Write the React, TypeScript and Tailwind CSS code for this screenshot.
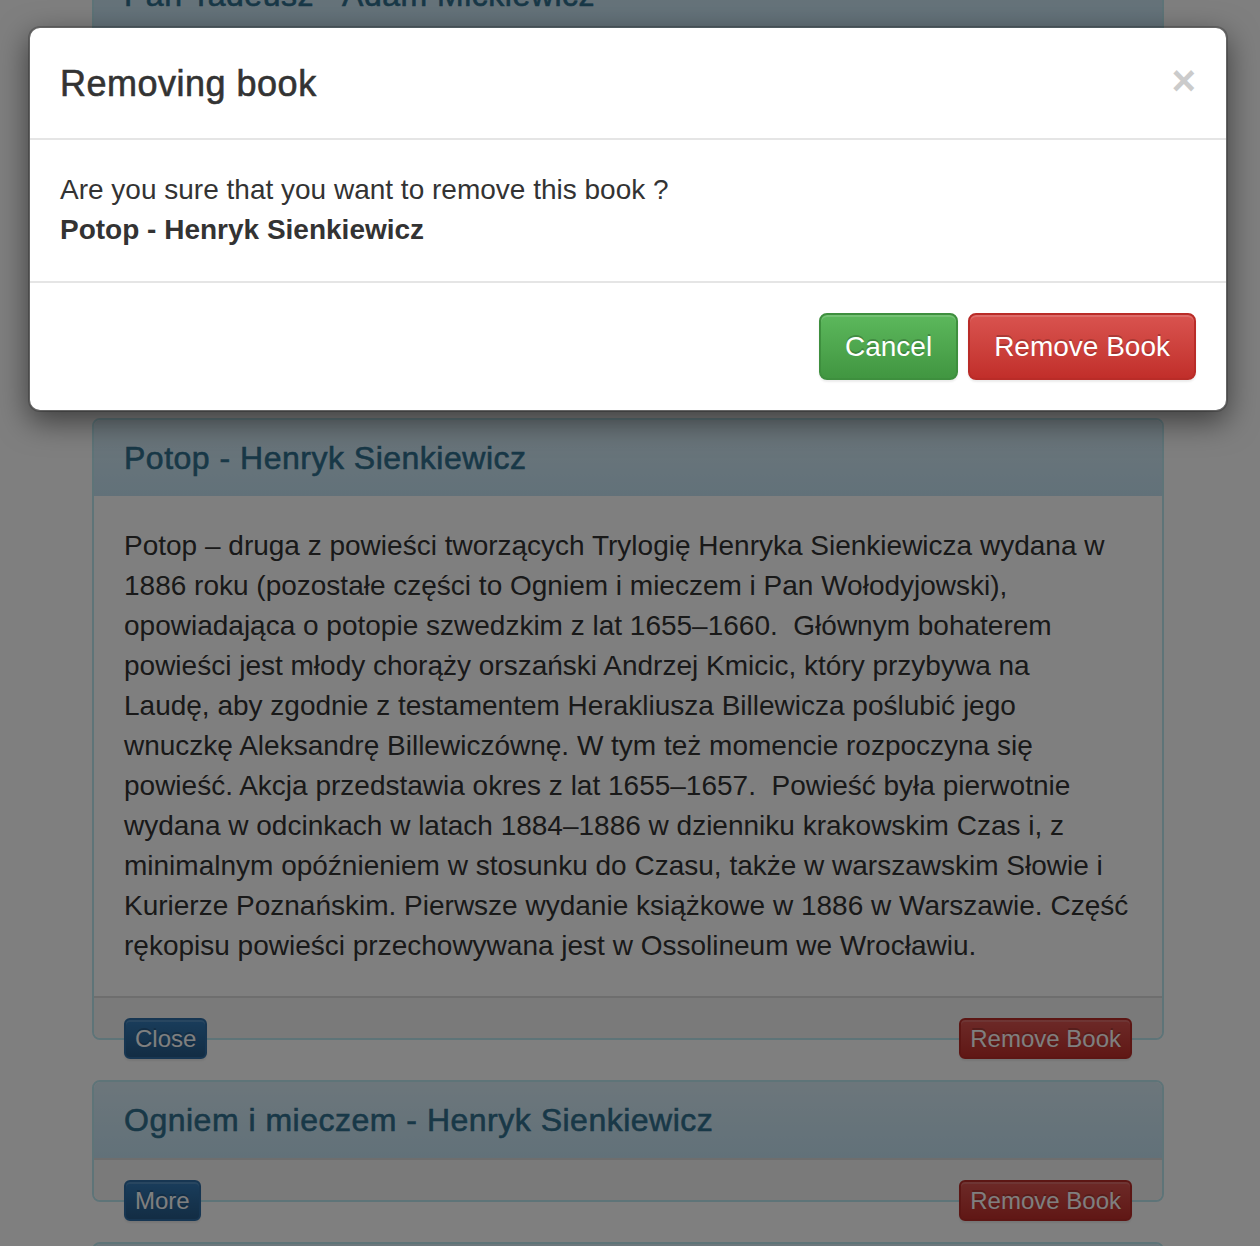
import React from "react";

const FONT = "font-['Liberation_Sans','Helvetica_Neue',Arial,sans-serif]";
// Helvetica Neue 500 look for headings
const HEADING = "font-normal tracking-[0.5px] [-webkit-text-stroke:0.6px_currentColor]";

const POTOP_LINES = [
	"Potop – druga z powieści tworzących Trylogię Henryka Sienkiewicza wydana w",
	"1886 roku (pozostałe części to Ogniem i mieczem i Pan Wołodyjowski),",
	"opowiadająca o potopie szwedzkim z lat 1655–1660.\u00a0 Głównym bohaterem",
	"powieści jest młody chorąży orszański Andrzej Kmicic, który przybywa na",
	"Laudę, aby zgodnie z testamentem Herakliusza Billewicza poślubić jego",
	"wnuczkę Aleksandrę Billewiczównę. W tym też momencie rozpoczyna się",
	"powieść. Akcja przedstawia okres z lat 1655–1657.\u00a0 Powieść była pierwotnie",
	"wydana w odcinkach w latach 1884–1886 w dzienniku krakowskim Czas i, z",
	"minimalnym opóźnieniem w stosunku do Czasu, także w warszawskim Słowie i",
	"Kurierze Poznańskim. Pierwsze wydanie książkowe w 1886 w Warszawie. Część",
	"rękopisu powieści przechowywana jest w Ossolineum we Wrocławiu.",
];

const BTN_XS =
	"rounded-[6px] border-2 px-[9px] py-0 text-[24px] leading-[37px] text-white [text-shadow:0_-2px_0_rgba(0,0,0,0.2)] shadow-[inset_0_2px_0_rgba(255,255,255,0.15),0_2px_2px_rgba(0,0,0,0.075)]";
const BTN_PRIMARY = "border-[#2e6da4] bg-linear-to-b from-[#337ab7] to-[#265a88]";
const BTN_DANGER = "border-[#b92c28] bg-linear-to-b from-[#d9534f] to-[#c12e2a]";
const BTN_MD =
	"rounded-[8px] border-2 px-[24px] py-[11px] text-[28px] leading-[41px] text-white [text-shadow:0_-2px_0_rgba(0,0,0,0.2)] shadow-[inset_0_2px_0_rgba(255,255,255,0.15),0_2px_2px_rgba(0,0,0,0.075)]";

function Panel({
	title,
	left,
	children,
	bodyClass,
}: {
	title: string;
	left: string;
	children?: React.ReactNode;
	bodyClass?: string;
}) {
	return (
		<div className="mb-[40px] rounded-[8px] border-2 border-[#bce8f1] bg-white">
			<div className="rounded-t-[6px] bg-linear-to-b from-[#d9edf7] to-[#c4e3f3] px-[30px] py-[20px]">
				<h3 className={`text-[32px] leading-[36px] text-[#31708f] ${HEADING}`}>{title}</h3>
			</div>
			{(children || bodyClass) && (
				<div className={bodyClass ?? "px-[30px] py-[30px] text-[28px] leading-[40px] text-[#333]"}>
					{children}
				</div>
			)}
			<div className="h-[42px] rounded-b-[6px] border-t-2 border-[#ddd] bg-[#f5f5f5] px-[30px] pt-[20px]">
				<div className="flex h-0 items-start justify-between">
					<button className={`${BTN_XS} ${BTN_PRIMARY}`}>{left}</button>
					<button className={`${BTN_XS} ${BTN_DANGER}`}>Remove Book</button>
				</div>
			</div>
		</div>
	);
}

export default function App() {
	return (
		<div className={`relative h-[1246px] w-[1260px] overflow-hidden bg-white ${FONT}`}>
			{/* Page */}
			<div className="ml-[92px] mt-[-45px] w-[1072px]">
				<Panel title="Pan Tadeusz - Adam Mickiewicz" left="Close" bodyClass="h-[301px]" />
				<Panel title="Potop - Henryk Sienkiewicz" left="Close">
					{POTOP_LINES.map((line) => (
						<div key={line} className="whitespace-nowrap">
							{line}
						</div>
					))}
				</Panel>
				<Panel title="Ogniem i mieczem - Henryk Sienkiewicz" left="More" />
				<Panel title="Quo vadis - Henryk Sienkiewicz" left="More" />
			</div>

			{/* Backdrop */}
			<div className="absolute inset-0 bg-black/50" />

			{/* Modal */}
			<div className="absolute left-[28px] right-[32px] top-[26px] rounded-[12px] border-2 border-black/20 bg-white bg-clip-padding shadow-[0_10px_30px_rgba(0,0,0,0.5)]">
				<div className="flex items-start justify-between border-b-2 border-[#e5e5e5] px-[30px] pt-[30px] pb-[28px]">
					<h4 className={`text-[36px] leading-[52px] text-[#333] ${HEADING}`}>Removing book</h4>
					<button className="mt-[2px] text-[42px] leading-[42px] font-bold text-black opacity-20">×</button>
				</div>
				<div className="px-[30px] pt-[30px] pb-[31px] text-[28px] leading-[40px] text-[#333]">
					<div>Are you sure that you want to remove this book ?</div>
					<div className="font-bold">Potop - Henryk Sienkiewicz</div>
				</div>
				<div className="flex justify-end gap-[10px] border-t-2 border-[#e5e5e5] px-[30px] pt-[30px] pb-[30px]">
					<button className={`${BTN_MD} border-[#3e8f3e] bg-linear-to-b from-[#5cb85c] to-[#419641]`}>
						Cancel
					</button>
					<button className={`${BTN_MD} border-[#b92c28] bg-linear-to-b from-[#d9534f] to-[#c12e2a]`}>
						Remove Book
					</button>
				</div>
			</div>
		</div>
	);
}
